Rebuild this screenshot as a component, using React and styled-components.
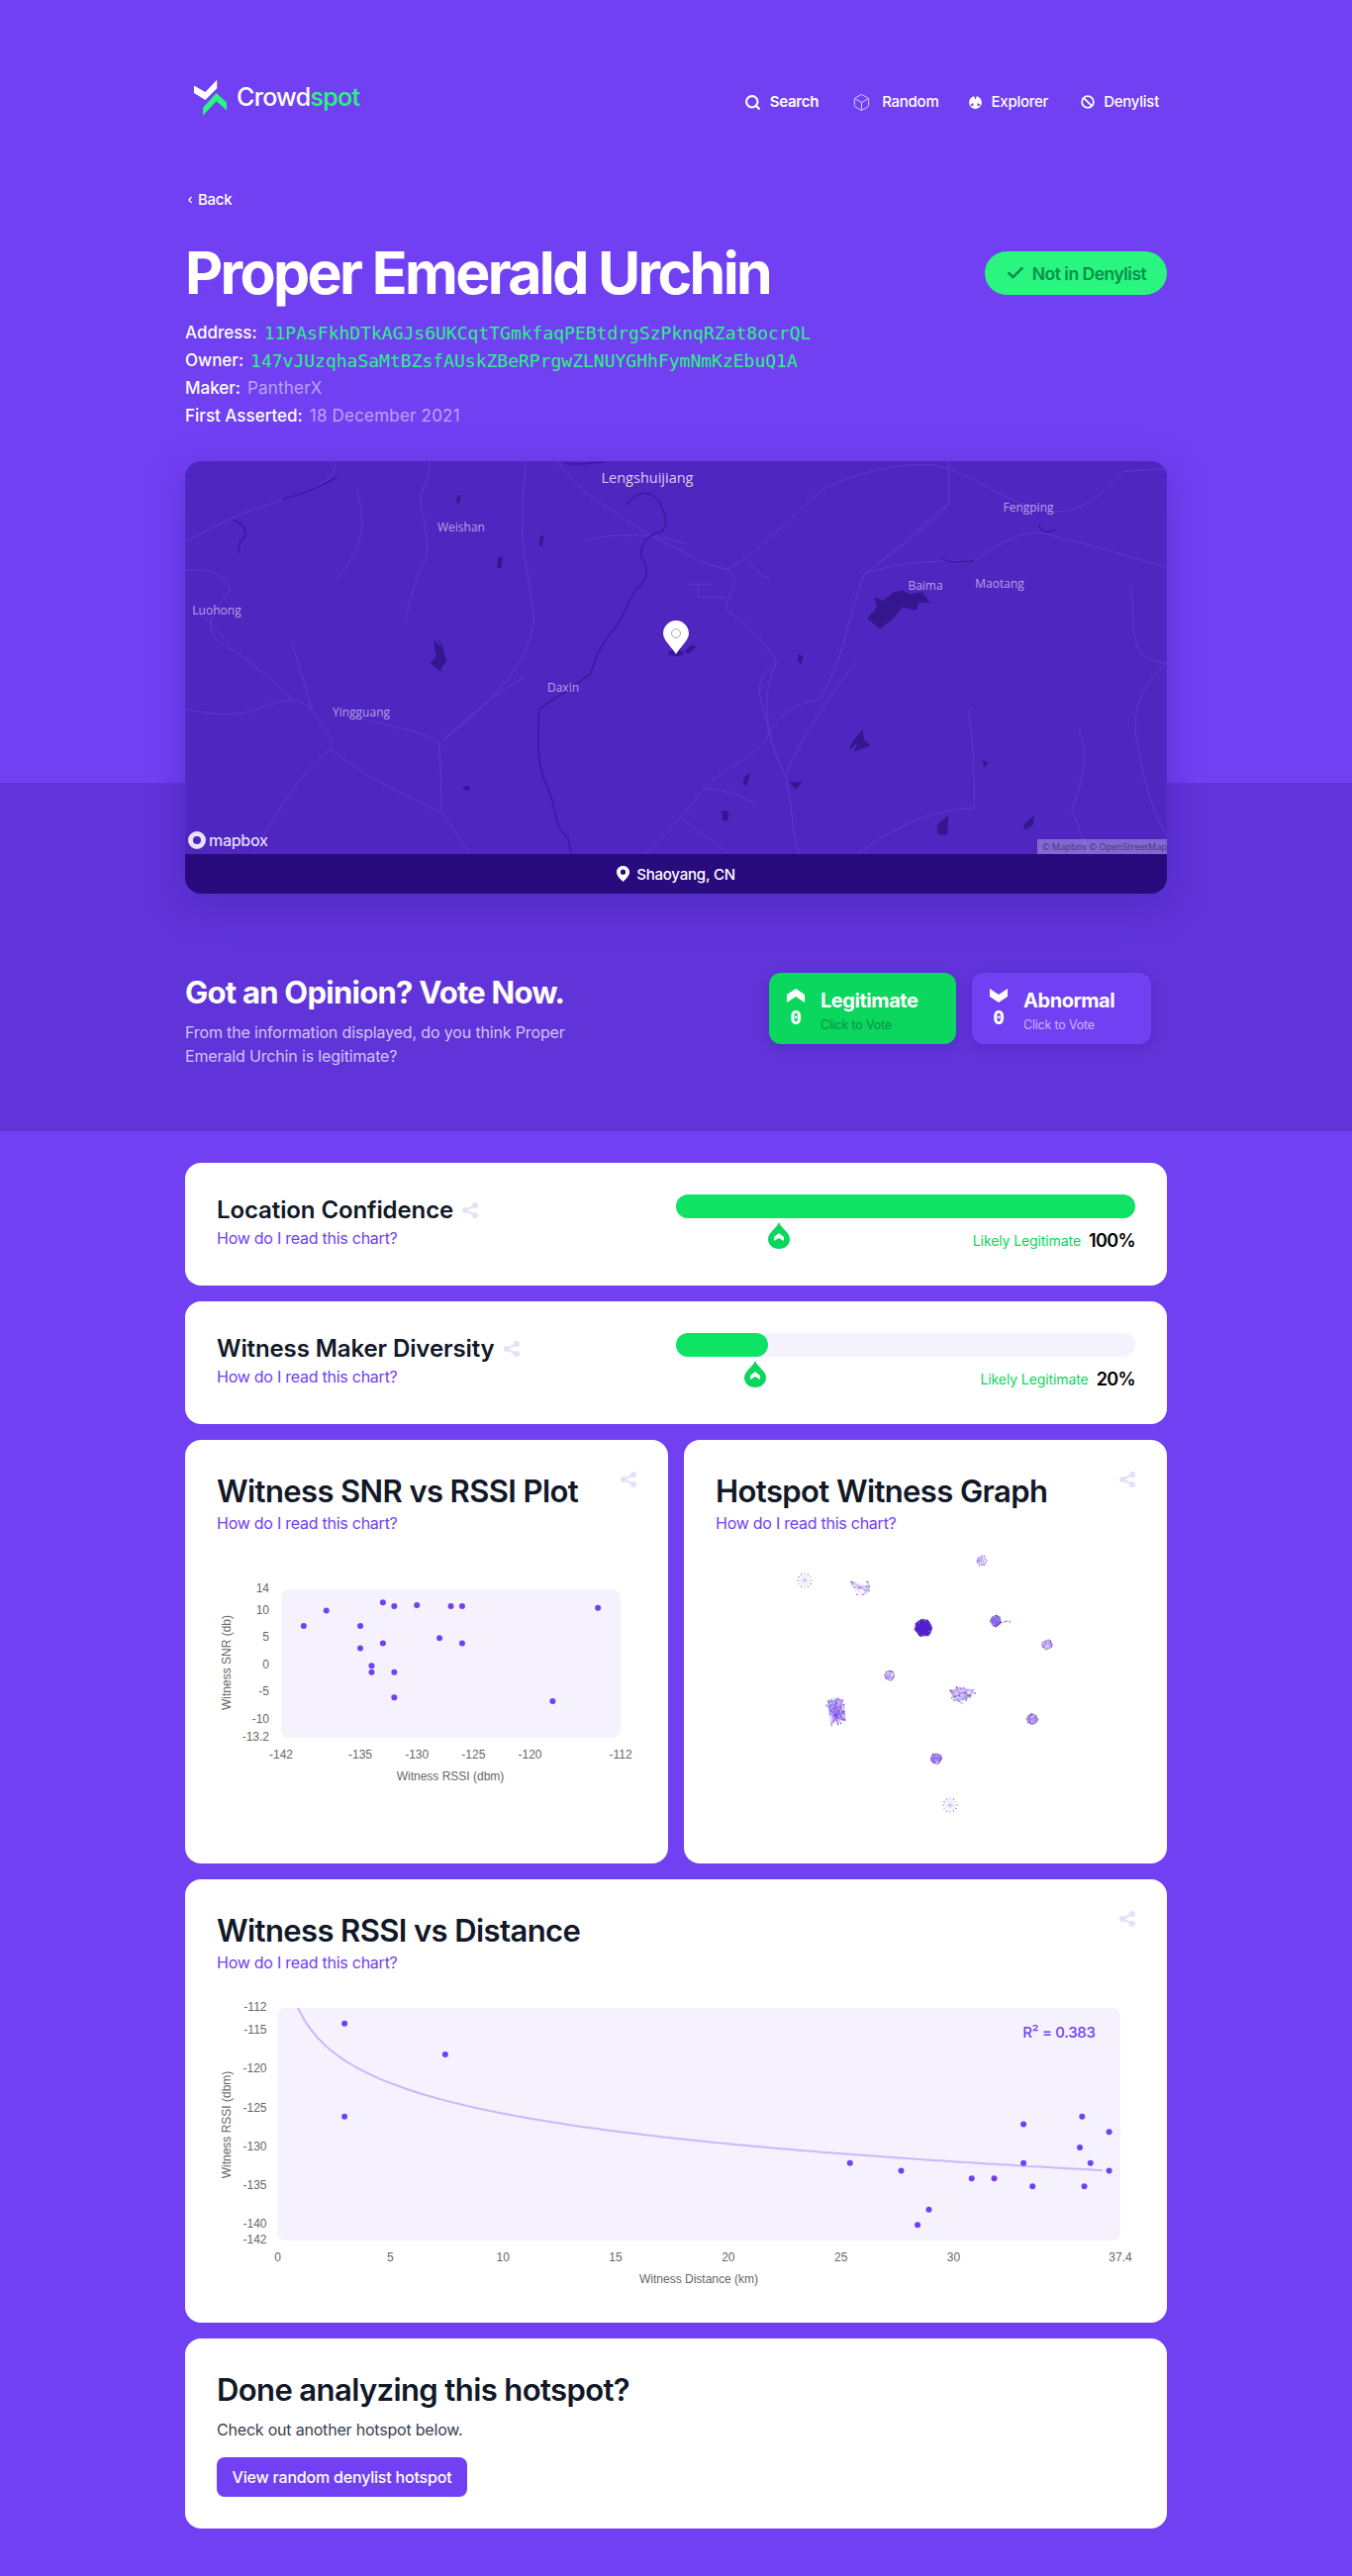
import React from "react";
import styled, { createGlobalStyle } from "styled-components";
import { Search, Box, Ban, Check, ChevronLeft } from "lucide-react";

const PURPLE = "#7140f3";
const DARK = "#111827";
const SANS = `"Inter", "Liberation Sans", sans-serif`;

const GlobalStyle = createGlobalStyle`
  body {
    margin: 0;
    background: ${PURPLE};
    font-family: ${SANS};
    color: #fff;
  }
`;

const Hero = styled.section`
  background: linear-gradient(${PURPLE} 0 791px, #6034d9 791px);
  padding: 80px 187px 64px;
`;

const Header = styled.header`
  display: flex;
  justify-content: space-between;
  align-items: flex-start;
  padding: 0 8px;
  margin-bottom: 75px;
`;

const Brand = styled.div`
  display: flex;
  align-items: center;
  gap: 9px;
  height: 37px;
`;

const BrandName = styled.span`
  font-size: 25px;
  font-weight: 500;
  letter-spacing: -0.7px;
  line-height: 37px;
  span {
    color: #2bf581;
  }
`;

const Nav = styled.nav`
  display: flex;
  margin-top: 12px;
`;

const NavItem = styled.a`
  display: flex;
  align-items: center;
  gap: ${(p) => p.$gap || 9}px;
  margin-left: ${(p) => p.$ml}px;
  font-size: 15px;
  font-weight: ${(p) => p.$weight || 500};
  letter-spacing: -0.25px;
  line-height: 22px;
`;

const Back = styled.a`
  display: flex;
  align-items: center;
  gap: 3px;
  font-size: 15px;
  font-weight: 500;
  letter-spacing: -0.3px;
  line-height: 20px;
  margin-bottom: 30px;
`;

const TitleRow = styled.div`
  display: flex;
  justify-content: space-between;
  align-items: center;
  height: 68px;
  margin-bottom: 12px;
`;

const Title = styled.h1`
  margin: 0;
  font-size: 59px;
  font-weight: 700;
  line-height: 68px;
  letter-spacing: -2.65px;
`;

const Badge = styled.div`
  display: flex;
  align-items: center;
  justify-content: center;
  gap: 7px;
  height: 44px;
  width: 184px;
  box-sizing: border-box;
  border-radius: 22px;
  background: #29f57f;
  color: #0a8f4b;
  font-size: 17.5px;
  font-weight: 600;
  letter-spacing: -0.5px;
  white-space: nowrap;
`;

const InfoList = styled.div`
  margin-bottom: 32px;
`;

const InfoRow = styled.div`
  display: flex;
  gap: 7px;
  height: 28px;
  align-items: center;
  font-size: 17px;
  font-weight: 500;
  letter-spacing: 0;
`;

const Address = styled.span`
  font-family: "DejaVu Sans Mono", monospace;
  font-size: 18px;
  font-weight: 400;
  color: #2bf581;
`;

const Muted = styled.span`
  font-weight: 400;
  letter-spacing: 0.2px;
  color: #b9a5fa;
`;

const MapCard = styled.div`
  border-radius: 16px;
  overflow: hidden;
  box-shadow: 0 10px 40px rgba(40, 11, 124, 0.25);
  margin-bottom: 80px;
`;

const MapArea = styled.div`
  position: relative;
  height: 397px;
  background: #4f26c0;
`;

const MapDrawing = styled.svg`
  display: block;
  width: 100%;
  height: 100%;
`;

const MapLabel = styled.span`
  position: absolute;
  left: ${(p) => p.$x}px;
  top: ${(p) => p.$y}px;
  transform: translate(-50%, -50%);
  font-family: "Open Sans", sans-serif;
  font-size: ${(p) => (p.$big ? 14.5 : 12)}px;
  color: rgba(255, 255, 255, ${(p) => (p.$big ? 0.78 : 0.58)});
  white-space: nowrap;
`;

const MapPin = styled.svg`
  position: absolute;
  left: 483px;
  top: 161px;
`;

const MapboxLogo = styled.div`
  position: absolute;
  left: 3px;
  bottom: 4px;
  display: flex;
  align-items: center;
  gap: 3px;
  font-size: 16px;
  font-weight: 500;
  letter-spacing: -0.3px;
  color: rgba(255, 255, 255, 0.85);
`;

const Attribution = styled.div`
  position: absolute;
  right: 0;
  bottom: 0;
  width: 131px;
  height: 15px;
  background: rgba(255, 255, 255, 0.3);
  font-family: "Open Sans", sans-serif;
  font-size: 9.5px;
  letter-spacing: -0.15px;
  line-height: 15px;
  white-space: nowrap;
  text-align: right;
  color: rgba(0, 0, 0, 0.5);
  box-sizing: border-box;
`;

const MapFooter = styled.div`
  display: flex;
  justify-content: center;
  align-items: center;
  gap: 7px;
  height: 40px;
  background: #280b7c;
  font-size: 15px;
  font-weight: 500;
  letter-spacing: -0.2px;
`;

const VoteRow = styled.div`
  display: flex;
  justify-content: space-between;
  align-items: flex-start;
`;

const VoteTitle = styled.h2`
  margin: 0 0 8px;
  font-size: 31px;
  font-weight: 700;
  line-height: 40px;
  letter-spacing: -0.75px;
`;

const VoteText = styled.p`
  margin: 0;
  width: 400px;
  font-size: 16px;
  line-height: 24px;
  letter-spacing: -0.15px;
  color: rgba(255, 255, 255, 0.72);
`;

const VoteButtons = styled.div`
  display: flex;
  gap: 16px;
  margin-right: 16px;
`;

const VoteButton = styled.button`
  display: flex;
  gap: 16px;
  width: ${(p) => p.$width}px;
  height: 72px;
  padding: 16px 18px 0;
  box-sizing: border-box;
  border: 0;
  border-radius: 12px;
  background: ${(p) => p.$bg};
  box-shadow: 0 4px 12px rgba(40, 11, 124, 0.18);
  color: #fff;
  font-family: ${SANS};
  text-align: left;
`;

const VoteCount = styled.div`
  display: flex;
  flex-direction: column;
  align-items: center;
  gap: 5px;
  width: 18px;
  font-family: "DejaVu Sans Mono", monospace;
  font-size: 20px;
  font-weight: 700;
  line-height: 20px;
`;

const VoteLabel = styled.div`
  font-size: 20px;
  font-weight: 700;
  letter-spacing: -0.45px;
  line-height: 24px;
  margin-bottom: 5px;
`;

const VoteHint = styled.div`
  font-size: 12.5px;
  line-height: 16px;
  letter-spacing: -0.2px;
  color: ${(p) => p.$color};
`;

const Content = styled.main`
  display: flex;
  flex-direction: column;
  gap: 16px;
  padding: 32px 187px 48px;
`;

const Card = styled.div`
  background: #fff;
  border-radius: 16px;
  padding: 32px;
  color: ${DARK};
`;

const MetricCard = styled(Card)`
  display: grid;
  grid-template-columns: 1fr 464px;
`;

const MetricTitle = styled.div`
  display: flex;
  align-items: center;
  gap: 9px;
  font-size: 24px;
  font-weight: 600;
  line-height: 32px;
  letter-spacing: -0.1px;
`;

const HelpLink = styled.a`
  display: block;
  font-size: 16px;
  line-height: 24px;
  letter-spacing: -0.25px;
  color: ${PURPLE};
`;

const BarTrack = styled.div`
  position: relative;
  height: 24px;
  margin-bottom: 8px;
  border-radius: 12px;
  background: #f5f2fd;
`;

const BarFill = styled.div`
  height: 100%;
  border-radius: 12px;
  background: #0ee365;
`;

const Marker = styled.svg`
  position: absolute;
  top: 28px;
  transform: translateX(-50%);
`;

const ScoreRow = styled.div`
  display: flex;
  justify-content: flex-end;
  align-items: center;
  gap: 8px;
  height: 28px;
`;

const ScoreLabel = styled.span`
  font-size: 14px;
  letter-spacing: -0.1px;
  color: #0bd65d;
`;

const ScoreValue = styled.span`
  font-size: 18px;
  font-weight: 600;
  letter-spacing: -0.6px;
  color: #000;
`;

const ChartGrid = styled.div`
  display: grid;
  grid-template-columns: 1fr 1fr;
  gap: 16px;
`;

const ChartHead = styled.div`
  display: flex;
  justify-content: space-between;
  align-items: flex-start;
`;

const ChartTitle = styled.h2`
  margin: 0;
  font-size: 31px;
  font-weight: 600;
  line-height: 40px;
  letter-spacing: -0.6px;
`;

const ChartSvg = styled.svg`
  display: block;
`;

const AxisText = styled.text`
  font-family: "Liberation Sans", sans-serif;
  font-size: 12px;
  fill: #666;
  dominant-baseline: middle;
`;

const RSquared = styled.text`
  font-family: ${SANS};
  font-size: 15px;
  font-weight: 500;
  letter-spacing: -0.3px;
  fill: ${PURPLE};
  dominant-baseline: middle;
`;

const DoneText = styled.p`
  margin: 8px 0 16px;
  font-size: 16px;
  line-height: 24px;
  letter-spacing: -0.2px;
  color: #374151;
`;

const DoneButton = styled.button`
  display: block;
  width: 253px;
  height: 40px;
  border: 0;
  border-radius: 8px;
  background: ${PURPLE};
  color: #fff;
  font-family: ${SANS};
  font-size: 16px;
  font-weight: 500;
  letter-spacing: -0.2px;
`;

const ShareIcon = () => (
  <svg width="16" height="16" viewBox="0 0 16 16" fill="#e5e0f7">
    <circle cx="3" cy="8" r="3" />
    <circle cx="13" cy="3" r="3" />
    <circle cx="13" cy="13" r="3" />
    <path d="M3 8 13 3M3 8l10 5" stroke="#e5e0f7" strokeWidth="2" />
  </svg>
);

const LogoMark = () => (
  <svg width="35" height="37" viewBox="45 60 105 113">
    <path d="M47 80 82 100 118 62V88L82 124 47 103Z" fill="#fff" />
    <path d="M75 172V148L116 103 148 132V156L116 128Z" fill="#2bf581" />
  </svg>
);

const ExplorerIcon = () => (
  <svg width="13" height="13" viewBox="0 0 14 14">
    <circle cx="7" cy="7" r="7" fill="#fff" />
    <path d="M5.500 0 7 4 8.500 0ZM1 10 4.500 7.500 5 11ZM13 10 9.500 7.500 9 11Z" fill={PURPLE} />
  </svg>
);

const PinIcon = () => (
  <svg width="13" height="16" viewBox="0 0 13 16">
    <path
      d="M6.500 0C10 0 13 2.600 13 6.200 13 10 9 13.500 6.500 16 4 13.500 0 10 0 6.200 0 2.600 3 0 6.500 0Z"
      fill="#fff"
    />
    <circle cx="6.500" cy="6.200" r="2.600" fill="#280b7c" />
  </svg>
);

const ChevronUp = () => (
  <svg width="18" height="14" viewBox="0 0 18 14" fill="#fff">
    <path d="M0 6 9 0 18 6V14L9 8 0 14Z" />
  </svg>
);

const ChevronDown = () => (
  <svg width="18" height="14" viewBox="0 0 18 14" fill="#fff">
    <path d="M0 0 9 6 18 0V8L9 14 0 8Z" />
  </svg>
);

const DropMarker = ({ left }) => (
  <Marker width="22" height="27" viewBox="0 0 22 27" style={{ left: `${left}%` }}>
    <path d="M11 0C13 6 22 10 22 17 22 23 17 27 11 27 5 27 0 23 0 17 0 10 9 6 11 0Z" fill="#0bd65d" />
    <path d="M11 11 16 15V19L11 16 6 19V15Z" fill="#fff" />
  </Marker>
);

// map is traced in a 1510x1190 box and stretched to the card
const roads = [
  "M600 48C620 130 680 190 730 260 790 320 830 370 860 375 900 340 960 210 1010 130 1050 90 1120 50 1180 60 1240 90 1270 150 1320 180 1370 215 1400 220 1470 80L1536 70",
  "M1200 48V180C1150 280 1100 350 1070 390 1040 560 1040 650 1000 770 950 790 930 840 920 890 900 950 850 980 825 1040 790 1120 760 1200 730 1238",
  "M860 500C900 560 930 620 935 660 910 760 920 900 950 1000 960 1100 960 1180 970 1238",
  "M27 290C70 250 100 210 170 170 240 120 260 100 255 48",
  "M26 380C60 370 90 390 95 440 60 520 50 580 100 620 140 680 170 720 190 770",
  "M26 800C60 810 100 830 150 790 180 770 200 760 220 800 240 860 260 900 250 920 200 1000 170 1100 130 1238",
  "M250 920C300 1000 350 1050 420 1110 440 1160 450 1200 465 1238",
  "M420 900C460 830 540 720 560 560 570 500 540 350 545 200 545 140 550 90 550 48",
  "M1370 280C1420 300 1480 340 1536 370",
  "M1230 800C1240 900 1240 1050 1240 1100 1180 1100 1120 1150 1060 1238",
  "M1400 860C1420 950 1400 1050 1390 1100 1400 1160 1410 1200 1415 1238",
  "M825 1040C860 1040 890 1070 905 1090M790 1130C820 1180 850 1210 860 1238",
  "M800 420H835M815 420V460H855",
  "M640 290C690 260 750 270 800 300",
  "M400 48C410 100 380 130 390 200 400 280 400 320 395 350 380 400 370 480 365 530",
  "M1536 660C1500 720 1480 800 1490 900 1500 1000 1510 1100 1536 1180",
  "M300 830C340 850 380 860 415 895 420 960 420 1040 420 1110",
  "M860 375C890 420 850 460 860 500M890 340C900 370 910 400 925 400",
  "M1070 390C1130 350 1170 350 1240 350 1290 280 1330 240 1370 280",
  "M190 600C200 660 210 720 220 800",
  "M1090 360C1130 300 1180 200 1200 180",
  "M930 670C890 720 920 800 925 880",
  "M1060 650C1040 700 1010 780 980 880 960 950 950 1000 950 1000",
  "M40 500C70 540 85 580 95 600",
  "M550 700C500 750 440 860 420 900",
  "M290 130C300 200 310 300 260 400",
  "M1480 430C1490 550 1470 650 1536 660",
];

const rivers = [
  "M705 180C720 140 740 130 755 170 765 210 770 240 760 260 740 270 725 290 728 340 745 380 730 420 720 435 705 480 700 530 680 570 660 620 655 660 650 690 620 740 590 770 570 800 570 880 565 950 580 1020 600 1100 590 1150 615 1190L620 1238",
  "M100 225C120 240 125 270 110 295L108 325",
  "M175 165C210 145 240 120 260 95",
  "M610 55C630 60 650 55 670 50",
  "M415 590C425 610 425 640 415 660 415 670 420 680 420 685",
  "M1190 345C1210 360 1220 350 1240 350",
  "M1340 240C1340 260 1350 270 1365 255",
];

const lakes = [
  "M1075 525 1090 490 1085 460 1100 470 1115 445 1130 440 1140 450 1160 445 1172 480 1155 475 1150 500 1130 490 1115 525 1095 555Z",
  "M408 590 420 610 428 650 418 685 403 660 412 640Z",
  "M507 340 515 335 512 372 506 372Z",
  "M444 155 450 150 448 175 444 175Z",
  "M572 275 578 272 575 305 571 305Z",
  "M805 605 812 610 800 630 794 625Z",
  "M970 632 976 640 974 665 968 650Z",
  "M1048 925C1050 890 1062 880 1068 860L1070 890 1080 910 1055 928 1060 900Z",
  "M886 1005 895 992 890 1030 884 1030Z",
  "M955 1020 975 1020 965 1042Z",
  "M852 1105 863 1110 860 1138 852 1135Z",
  "M1182 1150 1200 1120 1198 1180 1184 1180Z",
  "M1315 1150 1332 1122 1330 1150 1318 1165Z",
  "M1252 955 1262 960 1255 975Z",
  "M452 1035 465 1032 460 1048Z",
];

const mapLabels = [
  { text: "Lengshuijiang", x: 467, y: 16, big: true },
  { text: "Weishan", x: 279, y: 66 },
  { text: "Fengping", x: 852, y: 46 },
  { text: "Baima", x: 748, y: 125 },
  { text: "Maotang", x: 823, y: 123 },
  { text: "Luohong", x: 32, y: 150 },
  { text: "Daxin", x: 382, y: 228 },
  { text: "Yingguang", x: 178, y: 253 },
];

const snrPoints = [
  [-140, 7.3], [-138, 10.1], [-135, 7.3], [-135, 3.2], [-133, 11.6], [-133, 4.1],
  [-132, 10.9], [-130, 11.1], [-127, 10.9], [-126, 10.9], [-126, 4.1], [-128, 5.05],
  [-114, 10.6], [-118, -6.5], [-134, 0], [-134, -1.2], [-132, -1.2], [-132, -5.8],
];

const distancePoints = [
  [2.97, -114], [7.44, -118], [2.97, -126], [25.4, -132], [27.67, -133], [30.8, -134],
  [31.8, -134], [28.9, -138], [28.4, -140], [33.1, -127], [33.1, -132], [33.5, -135],
  [35.7, -126], [35.6, -130], [36.07, -132], [35.8, -135], [36.9, -128], [36.9, -133],
];

const snrX = (v) => 65 + ((v + 142) / 30) * 343;
const snrY = (v) => 55 + ((14 - v) / 27.2) * 150;

const SnrChart = () => (
  <ChartSvg width="424" height="300">
    <rect x="65" y="55" width="343" height="150" rx="8" fill="#f5f2fd" />
    {[14, 10, 5, 0, -5, -10, -13.2].map((t) => (
      <AxisText key={t} x="53" y={snrY(t) - 0.5} textAnchor="end">{t}</AxisText>
    ))}
    {[-142, -135, -130, -125, -120, -112].map((t) => (
      <AxisText key={t} x={snrX(t)} y="223" textAnchor="middle">{t}</AxisText>
    ))}
    <AxisText x="236" y="245" textAnchor="middle">Witness RSSI (dbm)</AxisText>
    <AxisText x="11" y="129" textAnchor="middle" transform="rotate(-90 11 129)">Witness SNR (db)</AxisText>
    {snrPoints.map(([x, y]) => (
      <circle key={`${x}${y}`} cx={snrX(x)} cy={snrY(y)} r="3" fill={PURPLE} />
    ))}
  </ChartSvg>
);

const distX = (v) => 61.5 + (v / 37.4) * 851.5;
const distY = (v) => 34 + ((-112 - v) / 30) * 235;

const fitPath = () => {
  let d = "";
  for (let x = 0.9; x <= 36.9; x += 0.3) {
    const y = -112.6 - 5.65 * Math.log(x);
    d += `${d ? "L" : "M"}${distX(x).toFixed(1)} ${distY(y).toFixed(1)}`;
  }
  return d;
};

const DistanceChart = () => (
  <ChartSvg width="928" height="320">
    <rect x="61.5" y="34" width="851.5" height="235" rx="8" fill="#f5f2fd" />
    {[-112, -115, -120, -125, -130, -135, -140, -142].map((t) => (
      <AxisText key={t} x="50.5" y={distY(t) - 0.5} textAnchor="end">{t}</AxisText>
    ))}
    {[0, 5, 10, 15, 20, 25, 30, 37.4].map((t) => (
      <AxisText key={t} x={distX(t)} y="287" textAnchor="middle">{t}</AxisText>
    ))}
    <AxisText x="487" y="309" textAnchor="middle">Witness Distance (km)</AxisText>
    <AxisText x="11" y="152" textAnchor="middle" transform="rotate(-90 11 152)">Witness RSSI (dbm)</AxisText>
    <path d={fitPath()} fill="none" stroke="#cbb8fa" strokeWidth="2" />
    <RSquared x="887.5" y="60" textAnchor="end">R² = 0.383</RSquared>
    {distancePoints.map(([x, y]) => (
      <circle key={`${x}${y}`} cx={distX(x)} cy={distY(y)} r="3" fill={PURPLE} />
    ))}
  </ChartSvg>
);

// small seeded random so the network looks the same every run
let seed = 11;
const rnd = () => {
  seed = (seed * 16807) % 2147483647;
  return seed / 2147483647;
};

const NODE_COLORS = ["#5a2be0", "#5a2be0", "#d8344f", "#2bd576", "#2f6fe0", "#e08a3c"];

const makeCluster = ({ cx, cy, rx, ry, nodes, edges, star, ring }) => {
  const pts = [];
  for (let i = 0; i < nodes; i++) {
    const a = star || ring ? (i / nodes) * Math.PI * 2 : rnd() * Math.PI * 2;
    const r = star ? 1 : ring ? 0.75 + rnd() * 0.25 : Math.sqrt(rnd());
    pts.push([cx + Math.cos(a) * r * rx, cy + Math.sin(a) * r * ry]);
  }
  const lines = [];
  if (star) {
    pts.forEach((p) => lines.push([[cx, cy], p]));
  } else {
    for (let i = 0; i < edges; i++) {
      lines.push([pts[Math.floor(rnd() * nodes)], pts[Math.floor(rnd() * nodes)]]);
    }
  }
  return { pts, lines };
};

const clusters = [
  { cx: 90, cy: 46, rx: 7, ry: 7, nodes: 12, star: true },
  { cx: 147, cy: 52, rx: 13, ry: 10, nodes: 18, edges: 34 },
  { cx: 269, cy: 26, rx: 5.5, ry: 5.5, nodes: 12, edges: 30, ring: true },
  { cx: 210, cy: 94, rx: 9, ry: 9, nodes: 36, edges: 500, ring: true, heavy: true },
  { cx: 283, cy: 87, rx: 6, ry: 6, nodes: 24, edges: 120, ring: true },
  { cx: 293, cy: 88, rx: 8, ry: 4, nodes: 6, edges: 8 },
  { cx: 335, cy: 111, rx: 5.5, ry: 5.5, nodes: 14, edges: 50, ring: true },
  { cx: 176, cy: 142, rx: 5.5, ry: 5.5, nodes: 16, edges: 60, ring: true },
  { cx: 250, cy: 162, rx: 16, ry: 9, nodes: 30, edges: 90 },
  { cx: 122, cy: 179, rx: 12, ry: 16, nodes: 44, edges: 170 },
  { cx: 320, cy: 186, rx: 6, ry: 6, nodes: 18, edges: 90, ring: true },
  { cx: 223, cy: 226, rx: 6, ry: 6, nodes: 20, edges: 90, ring: true },
  { cx: 237, cy: 273, rx: 7, ry: 7, nodes: 12, star: true },
].map((c) => ({ ...c, ...makeCluster(c) }));

const WitnessGraph = () => (
  <ChartSvg width="424" height="300">
    {clusters.map((c) => (
      <g key={`${c.cx}-${c.cy}`}>
        {c.lines.map(([a, b], i) => (
          <line
            key={i}
            x1={a[0]}
            y1={a[1]}
            x2={b[0]}
            y2={b[1]}
            stroke={c.heavy ? "#4f1fd0" : PURPLE}
            strokeOpacity={c.heavy ? 0.7 : 0.32}
            strokeWidth="0.5"
          />
        ))}
        {c.pts.map((p, i) => (
          <circle key={i} cx={p[0]} cy={p[1]} r="0.6" fill={NODE_COLORS[i % NODE_COLORS.length]} />
        ))}
      </g>
    ))}
  </ChartSvg>
);

const Metric = ({ title, value, marker }) => (
  <MetricCard>
    <div>
      <MetricTitle>
        {title}
        <ShareIcon />
      </MetricTitle>
      <HelpLink>How do I read this chart?</HelpLink>
    </div>
    <div>
      <BarTrack>
        <BarFill style={{ width: `${value}%` }} />
        <DropMarker left={marker} />
      </BarTrack>
      <ScoreRow>
        <ScoreLabel>Likely Legitimate</ScoreLabel>
        <ScoreValue>{value}%</ScoreValue>
      </ScoreRow>
    </div>
  </MetricCard>
);

const ChartHeader = ({ title }) => (
  <>
    <ChartHead>
      <ChartTitle>{title}</ChartTitle>
      <ShareIcon />
    </ChartHead>
    <HelpLink>How do I read this chart?</HelpLink>
  </>
);

const App = () => {
  return (
    <>
      <GlobalStyle />
      <Hero>
        <Header>
          <Brand>
            <LogoMark />
            <BrandName>
              Crowd<span>spot</span>
            </BrandName>
          </Brand>
          <Nav>
            <NavItem $weight={600}>
              <Search size={17} strokeWidth={3} />
              Search
            </NavItem>
            <NavItem $ml={34} $gap={11}>
              <Box size={19} strokeWidth={1.25} color="#d5c8fd" />
              Random
            </NavItem>
            <NavItem $ml={31}>
              <ExplorerIcon />
              Explorer
            </NavItem>
            <NavItem $ml={33}>
              <Ban size={14} strokeWidth={3} />
              Denylist
            </NavItem>
          </Nav>
        </Header>
        <Back>
          <ChevronLeft size={10} strokeWidth={3} />
          Back
        </Back>
        <TitleRow>
          <Title>Proper Emerald Urchin</Title>
          <Badge>
            <Check size={20} strokeWidth={3} />
            Not in Denylist
          </Badge>
        </TitleRow>
        <InfoList>
          <InfoRow>
            Address: <Address>11PAsFkhDTkAGJs6UKCqtTGmkfaqPEBtdrgSzPknqRZat8ocrQL</Address>
          </InfoRow>
          <InfoRow>
            Owner: <Address>147vJUzqhaSaMtBZsfAUskZBeRPrgwZLNUYGHhFymNmKzEbuQ1A</Address>
          </InfoRow>
          <InfoRow>
            Maker: <Muted>PantherX</Muted>
          </InfoRow>
          <InfoRow>
            First Asserted: <Muted>18 December 2021</Muted>
          </InfoRow>
        </InfoList>
        <MapCard>
          <MapArea>
            <MapDrawing viewBox="26 48 1510 1190" preserveAspectRatio="none">
              {roads.map((d) => (
                <path key={d} d={d} fill="none" stroke="#5e38d6" strokeWidth="1" vectorEffect="non-scaling-stroke" />
              ))}
              {rivers.map((d) => (
                <path key={d} d={d} fill="none" stroke="#3a1a9e" strokeWidth="1.5" vectorEffect="non-scaling-stroke" />
              ))}
              {lakes.map((d) => (
                <path key={d} d={d} fill="#34168f" />
              ))}
            </MapDrawing>
            {mapLabels.map((l) => (
              <MapLabel key={l.text} $x={l.x} $y={l.y} $big={l.big}>
                {l.text}
              </MapLabel>
            ))}
            <MapPin width="26" height="36" viewBox="0 0 26 36">
              <ellipse cx="13" cy="33" rx="8" ry="3" fill="#2c1088" opacity="0.7" />
              <path d="M13 0C20 0 26 6 26 13 26 20 17 27 13 34 9 27 0 20 0 13 0 6 6 0 13 0Z" fill="#fff" />
              <circle cx="13" cy="13" r="4.500" fill="#fff" stroke="#a9a3bd" strokeWidth="1" />
            </MapPin>
            <MapboxLogo>
              <svg width="18" height="18" viewBox="0 0 18 18">
                <circle cx="9" cy="9" r="9" fill="#e8e2fb" />
                <circle cx="9" cy="9" r="4" fill="#4f26c0" />
              </svg>
              mapbox
            </MapboxLogo>
            <Attribution>© Mapbox © OpenStreetMap</Attribution>
          </MapArea>
          <MapFooter>
            <PinIcon />
            Shaoyang, CN
          </MapFooter>
        </MapCard>
        <VoteRow>
          <div>
            <VoteTitle>Got an Opinion? Vote Now.</VoteTitle>
            <VoteText>From the information displayed, do you think Proper Emerald Urchin is legitimate?</VoteText>
          </div>
          <VoteButtons>
            <VoteButton $bg="#0bd65d" $width={189}>
              <VoteCount>
                <ChevronUp />0
              </VoteCount>
              <div>
                <VoteLabel>Legitimate</VoteLabel>
                <VoteHint $color="#0a9148">Click to Vote</VoteHint>
              </div>
            </VoteButton>
            <VoteButton $bg={PURPLE} $width={181}>
              <VoteCount>
                <ChevronDown />0
              </VoteCount>
              <div>
                <VoteLabel>Abnormal</VoteLabel>
                <VoteHint $color="#c8b6fb">Click to Vote</VoteHint>
              </div>
            </VoteButton>
          </VoteButtons>
        </VoteRow>
      </Hero>
      <Content>
        <Metric title="Location Confidence" value={100} marker={22.4} />
        <Metric title="Witness Maker Diversity" value={20} marker={17.3} />
        <ChartGrid>
          <Card>
            <ChartHeader title="Witness SNR vs RSSI Plot" />
            <SnrChart />
          </Card>
          <Card>
            <ChartHeader title="Hotspot Witness Graph" />
            <WitnessGraph />
          </Card>
        </ChartGrid>
        <Card>
          <ChartHeader title="Witness RSSI vs Distance" />
          <DistanceChart />
        </Card>
        <Card>
          <ChartTitle>Done analyzing this hotspot?</ChartTitle>
          <DoneText>Check out another hotspot below.</DoneText>
          <DoneButton>View random denylist hotspot</DoneButton>
        </Card>
      </Content>
    </>
  );
};

export default App;
